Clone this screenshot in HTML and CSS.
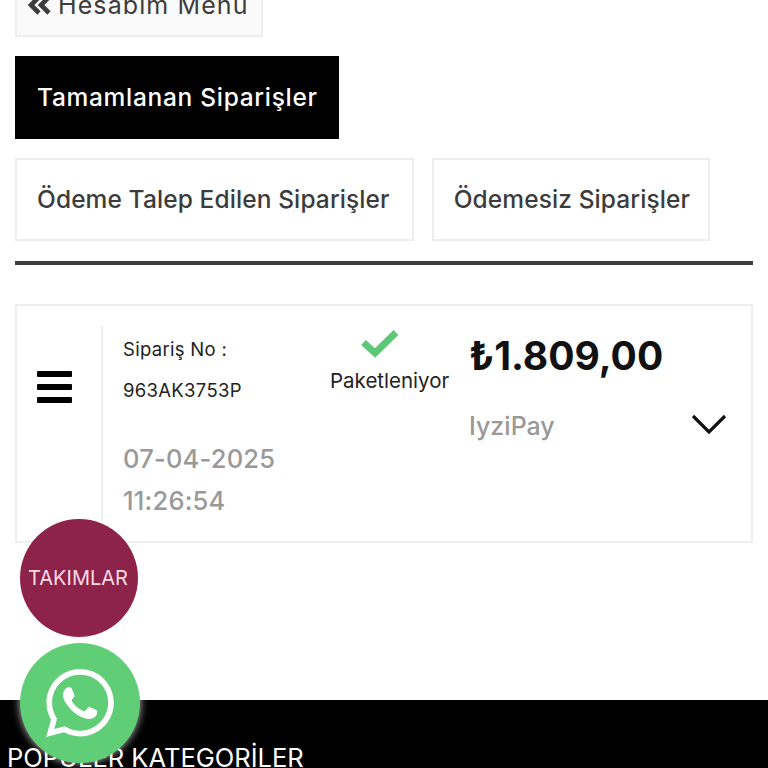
FILE: index.html
```html
<!DOCTYPE html>
<html lang="tr">
<head>
    <meta charset="UTF-8">
    <meta name="viewport" content="width=device-width, initial-scale=1.0">
    <title>Siparişlerim</title>
    <link rel="stylesheet" href="styles.css">
</head>
<body>
    <main class="content">
        <a class="tab tab-back" href="#">
            <svg class="back-icon" viewBox="0 0 24 20" aria-hidden="true">
                <path d="M11 2 3 10l8 8M21 2l-8 8 8 8"/>
            </svg>
            Hesabım Menü
        </a>
        <div class="tabs">
            <a class="tab tab-active" href="#">Tamamlanan Siparişler</a>
        </div>
        <div class="tabs">
            <a class="tab" href="#">Ödeme Talep Edilen Siparişler</a>
            <a class="tab" href="#">Ödemesiz Siparişler</a>
        </div>
        <hr class="divider">

        <section class="order">
            <div class="order-menu">
                <span class="burger"></span>
                <span class="burger"></span>
                <span class="burger"></span>
            </div>
            <div class="order-info">
                <p class="order-label">Sipariş No :</p>
                <p class="order-label order-no">963AK3753P</p>
                <p class="order-date">07-04-2025<br>11:26:54</p>
            </div>
            <div class="order-status">
                <svg class="check-icon" viewBox="0 0 40 30" aria-hidden="true">
                    <path d="M3.5 14.5 15 25 36 4.5"/>
                </svg>
                <span>Paketleniyor</span>
            </div>
            <div class="order-total">
                <p class="order-price">₺1.809,00</p>
                <div class="order-pay">
                    <span class="order-method">IyziPay</span>
                    <svg class="chevron-icon" viewBox="0 0 36 22" aria-hidden="true">
                        <path d="M2 3l16 16L34 3"/>
                    </svg>
                </div>
            </div>
        </section>
    </main>

    <footer class="footer">
        <h2 class="footer-title">POPÜLER KATEGORİLER</h2>
    </footer>

    <a class="float-btn float-teams" href="#">TAKIMLAR</a>
    <a class="float-btn float-whatsapp" href="#" aria-label="WhatsApp">
        <svg class="whatsapp-icon" viewBox="0 0 24 24" aria-hidden="true">
            <path d="M17.47 14.38c-.3-.15-1.76-.87-2.03-.97-.27-.1-.47-.15-.67.15-.2.3-.77.97-.94 1.17-.17.2-.35.22-.65.07-.3-.15-1.26-.46-2.39-1.47-.88-.79-1.48-1.76-1.65-2.06-.17-.3-.02-.46.13-.61.13-.13.3-.35.45-.52.15-.17.2-.3.3-.5.1-.2.05-.37-.02-.52-.07-.15-.67-1.61-.92-2.21-.24-.58-.49-.5-.67-.51h-.57c-.2 0-.52.07-.79.37-.27.3-1.04 1.02-1.04 2.48s1.07 2.88 1.21 3.07c.15.2 2.1 3.2 5.08 4.49.71.31 1.26.49 1.69.63.71.23 1.36.2 1.87.12.57-.08 1.76-.72 2.01-1.41.25-.7.25-1.29.17-1.41-.07-.13-.27-.2-.57-.35zM12.05 21.78h-.01a9.87 9.87 0 0 1-5.03-1.38l-.36-.21-3.74.98 1-3.65-.24-.37a9.86 9.86 0 0 1-1.51-5.26c0-5.45 4.44-9.88 9.89-9.88 2.64 0 5.12 1.03 6.99 2.9a9.82 9.82 0 0 1 2.89 6.99c0 5.45-4.44 9.88-9.88 9.88zM20.46 3.49A11.82 11.82 0 0 0 12.05 0C5.5 0 .16 5.34.16 11.89c0 2.1.55 4.14 1.59 5.95L.06 24l6.3-1.65a11.88 11.88 0 0 0 5.68 1.45h.01c6.55 0 11.89-5.34 11.89-11.89 0-3.18-1.24-6.17-3.48-8.42z"/>
        </svg>
    </a>
</body>
</html>
```

FILE: styles.css
```css
* {
    box-sizing: border-box;
}

html,
body {
    height: 768px;
    overflow: hidden;
}

body {
    margin: 0;
    background-color: #fff;
    color: #3c3c3c;
    font-family: Inter, "Open Sans", sans-serif;
}

a {
    color: inherit;
    text-decoration: none;
}

p {
    margin: 0;
}

/* page is scrolled a little, the first button is cut by the top edge */
.content {
    height: 746px;
    margin-top: -46px;
    padding: 0 15px;
}

.tabs {
    display: flex;
    gap: 18px;
    margin-top: 19px;
}

.tab {
    display: flex;
    align-items: center;
    height: 83px;
    padding: 0 22px 2px 20px;
    border: 2px solid #eee;
    font-size: 24.5px;
    font-weight: 500;
    letter-spacing: 0.1px;
    white-space: nowrap;
}

.tab + .tab {
    padding-right: 18px;
}

.tab-back {
    width: 248px;
    gap: 6px;
    padding: 19px 0 0 11px;
    font-size: 25px;
    font-weight: 400;
    letter-spacing: 1.1px;
    background-color: #fafafa;
}

.back-icon {
    width: 24px;
    height: 20px;
    flex: none;
    fill: none;
    stroke: #3c3c3c;
    stroke-width: 4.6;
}

.tab-active {
    width: 324px;
    border-color: #000;
    background-color: #000;
    color: #fff;
    letter-spacing: 0.7px;
}

.divider {
    height: 4px;
    margin: 20px 0 39px;
    border: 0;
    background-color: #3c3c3c;
}

.order {
    display: flex;
    height: 239px;
    padding: 20px 0 0;
    border: 2px solid #eee;
}

.order-menu {
    display: flex;
    flex-direction: column;
    flex: none;
    gap: 7px;
    width: 86px;
    height: 196px;
    padding: 45px 0 0 20px;
    border-right: 2px solid #eee;
}

.burger {
    width: 35px;
    height: 6px;
    border-radius: 1px;
    background-color: #000;
}

.order-info {
    flex: none;
    width: 227px;
    padding: 5px 0 0 20px;
}

.order-label {
    height: 41px;
    font-size: 18.5px;
    line-height: 36px;
    letter-spacing: 0.3px;
    color: #222;
}

.order-date {
    margin-top: 25px;
    font-size: 25.5px;
    font-weight: 500;
    letter-spacing: 0.2px;
    line-height: 42px;
    color: #999;
}

.order-status {
    display: flex;
    flex-direction: column;
    flex: none;
    width: 140px;
    padding-top: 2px;
    font-size: 20.5px;
    color: #222;
}

.check-icon {
    width: 40px;
    height: 30px;
    margin: 0 0 10px 30px;
    fill: none;
    stroke: #5dc878;
    stroke-width: 7;
}

.order-total {
    flex: 1;
    padding-right: 24px;
}

.order-price {
    margin: 5px 0 0 -1px;
    font-size: 39px;
    font-weight: 700;
    line-height: 50px;
    color: #111;
}

.order-pay {
    display: flex;
    align-items: center;
    justify-content: space-between;
    margin-top: 26px;
    font-size: 25px;
    font-weight: 500;
    color: #999;
}

.order-method {
    margin: 4px 0 0 -1px;
}

.chevron-icon {
    width: 36px;
    height: 22px;
    fill: none;
    stroke: #111;
    stroke-width: 3.2;
}

.footer {
    height: 68px;
    overflow: hidden;
    padding: 42px 0 0 7px;
    background-color: #000;
    color: #fff;
}

.footer-title {
    margin: 0;
    font-size: 25.5px;
    font-weight: 400;
    line-height: 32px;
}

.float-btn {
    position: absolute;
    left: 20px;
    display: flex;
    align-items: center;
    justify-content: center;
    border-radius: 50%;
}

.float-teams {
    top: 519px;
    width: 118px;
    height: 118px;
    padding-right: 2px;
    background-color: #8e2349;
    color: #fbdbe6;
    font-size: 20px;
}

.float-whatsapp {
    top: 643px;
    width: 120px;
    height: 120px;
    background-color: #5fce77;
    box-shadow: 0 0 8px rgba(255, 255, 255, 0.75);
}

.whatsapp-icon {
    width: 68px;
    height: 68px;
    fill: #fff;
}
```
